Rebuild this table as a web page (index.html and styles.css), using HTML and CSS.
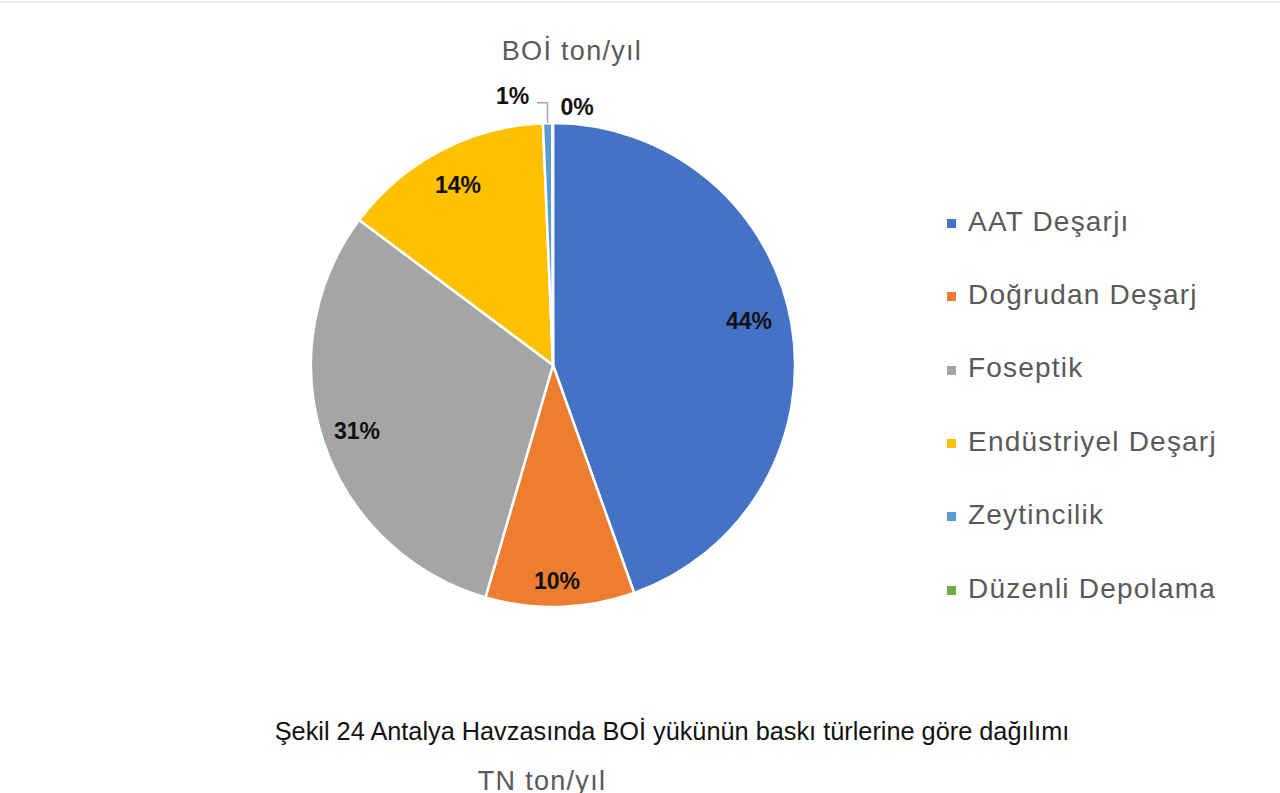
FILE: index.html
```html
<!DOCTYPE html>
<html lang="tr">
<head>
<meta charset="utf-8">
<title>BOİ ton/yıl</title>
<link rel="stylesheet" href="styles.css">
</head>
<body>
<div class="topline"></div>
<div class="figure">
  <div class="plot">
    <div class="chart-title">BOİ ton/yıl</div>
    <svg class="pie" width="930" height="560" viewBox="0 0 930 560" xmlns="http://www.w3.org/2000/svg">
      <g stroke="#ffffff" stroke-width="2.5" stroke-linejoin="round">
        <path fill="#4472C4" d="M553 298 L553 56 A242 242 0 0 1 634.2 526 Z"/>
        <path fill="#ED7D31" d="M553 298 L634.2 526 A242 242 0 0 1 485.5 530.4 Z"/>
        <path fill="#A5A5A5" d="M553 298 L485.5 530.4 A242 242 0 0 1 359.2 153 Z"/>
        <path fill="#FFC000" d="M553 298 L359.2 153 A242 242 0 0 1 542.9 56.2 Z"/>
        <path fill="#5B9BD5" d="M553 298 L542.9 56.2 A242 242 0 0 1 552.2 56 Z"/>
        <path fill="#70AD47" d="M553 298 L552.2 56 A242 242 0 0 1 553 56 Z"/>
      </g>
      <polyline points="537,35.7 547.5,35.7 547.5,56" fill="none" stroke="#A6A6A6" stroke-width="1.5"/>
      <g class="lbl">
        <text x="749" y="262">44%</text>
        <text x="557" y="522">10%</text>
        <text x="357" y="372">31%</text>
        <text x="458" y="126">14%</text>
        <text x="512.5" y="37">1%</text>
        <text x="577" y="48">0%</text>
      </g>
    </svg>
  </div>
  <ul class="legend">
    <li class="item"><span class="mark c-aat"></span><span class="name">AAT Deşarjı</span></li>
    <li class="item"><span class="mark c-dog"></span><span class="name">Doğrudan Deşarj</span></li>
    <li class="item"><span class="mark c-fos"></span><span class="name">Foseptik</span></li>
    <li class="item"><span class="mark c-end"></span><span class="name">Endüstriyel Deşarj</span></li>
    <li class="item"><span class="mark c-zey"></span><span class="name">Zeytincilik</span></li>
    <li class="item"><span class="mark c-duz"></span><span class="name">Düzenli Depolama</span></li>
  </ul>
</div>
<p class="caption">Şekil 24 Antalya Havzasında BOİ yükünün baskı türlerine göre dağılımı</p>
<div class="next-title">TN ton/yıl</div>
</body>
</html>
```
FILE: styles.css
```css
html, body {
  margin: 0;
  padding: 0;
  background: #ffffff;
  overflow: hidden;
}
body {
  font-family: "Liberation Sans", Arial, sans-serif;
  width: 1280px;
  height: 793px;
}
.topline {
  height: 2px;
  margin-top: 1px;
  background: #ececec;
}
.figure {
  display: flex;
  height: 690px;
}
.plot {
  width: 930px;
  display: flex;
  flex-direction: column;
}
.chart-title {
  padding-top: 33px;
  padding-left: 214px;
  text-align: center;
  font-size: 27px;
  line-height: 31px;
  letter-spacing: 1.3px;
  color: #595959;
}
.pie {
  display: block;
}
.lbl text {
  font-family: "Liberation Sans", Arial, sans-serif;
  font-weight: bold;
  font-size: 23px;
  text-anchor: middle;
  fill: #111111;
}
.legend {
  list-style: none;
  margin: 0;
  padding: 181.6px 0 0 17px;
  display: flex;
  flex-direction: column;
}
.item {
  display: flex;
  align-items: center;
  height: 73.4px;
}
.mark {
  width: 9px;
  height: 9px;
  margin-right: 12px;
  position: relative;
  top: 2px;
}
.name {
  font-size: 28px;
  line-height: 73.4px;
  letter-spacing: 1.2px;
  color: #595959;
  white-space: nowrap;
}
.c-aat { background: #4472C4; }
.c-dog { background: #ED7D31; }
.c-fos { background: #A5A5A5; }
.c-end { background: #FFC000; }
.c-zey { background: #5B9BD5; }
.c-duz { background: #70AD47; }
.caption {
  margin: 24px 0 0 0;
  padding-left: 64px;
  text-align: center;
  font-size: 25.3px;
  line-height: 29px;
  color: #111111;
}
.next-title {
  margin-top: 20px;
  padding-right: 196px;
  text-align: center;
  font-size: 27px;
  line-height: 31px;
  letter-spacing: 1.3px;
  color: #595959;
}
```
